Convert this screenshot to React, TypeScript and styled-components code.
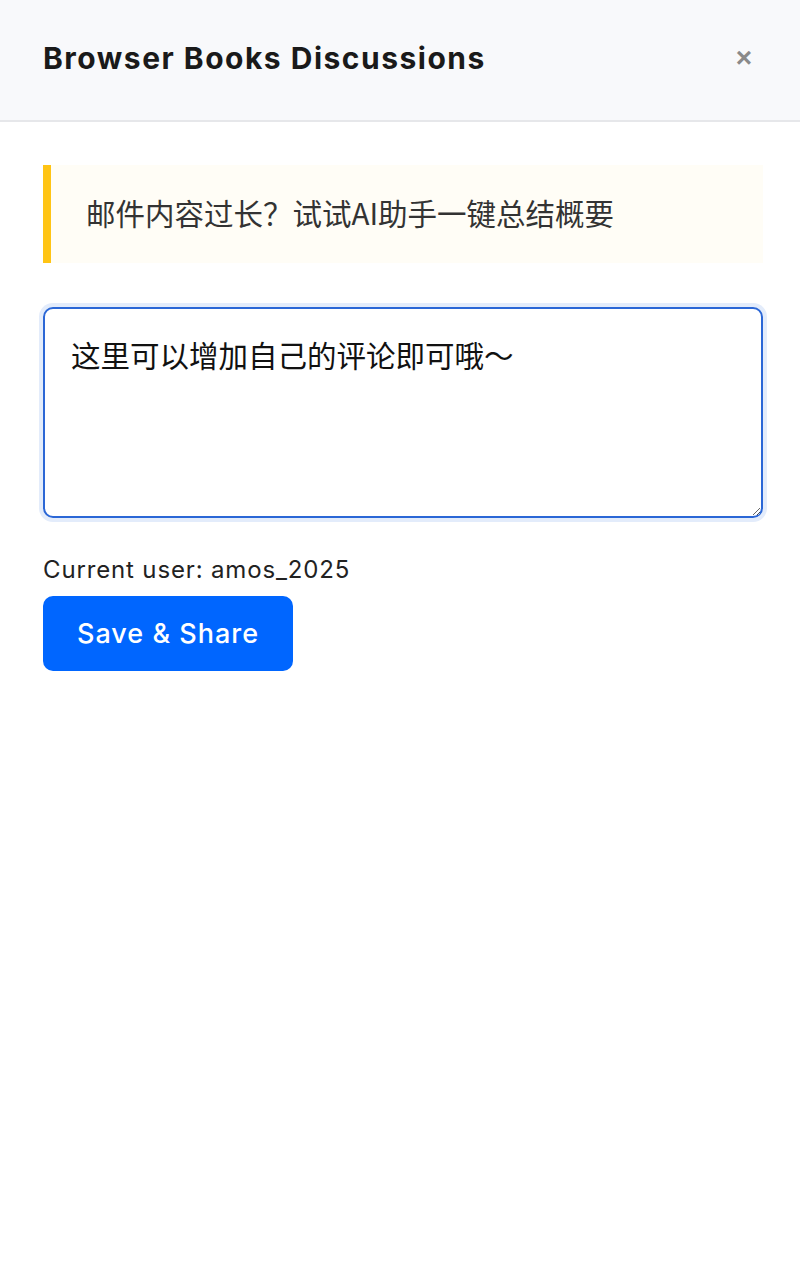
import React from "react";
import styled, { createGlobalStyle } from "styled-components";

const Global = createGlobalStyle`
  html, body { margin: 0; padding: 0; background: #ffffff; }
  body { font-family: Inter, "Noto Sans CJK SC", sans-serif; }
  * { box-sizing: border-box; }
`;

const Page = styled.div`
  width: 800px;
  min-height: 1283px;
  background: #ffffff;
  display: flex;
  flex-direction: column;
`;

const Header = styled.header`
  height: 122px;
  background: #f8f9fb;
  border-bottom: 2px solid #e6e7ea;
  display: flex;
  align-items: center;
  justify-content: space-between;
  padding: 0 43px 4px 43px;
`;

const Title = styled.h1`
  margin: 0;
  font-family: Inter, sans-serif;
  font-size: 30px;
  font-weight: 700;
  color: #1a1a1a;
  letter-spacing: 1.5px;
`;

const CloseButton = styled.button`
  border: none;
  background: transparent;
  color: #8a8a8a;
  font-family: "Liberation Sans", sans-serif;
  font-size: 28px;
  font-weight: 700;
  line-height: 1;
  padding: 0;
  margin-right: -5px;
  cursor: pointer;
  display: flex;
  align-items: center;
  justify-content: center;
  width: 36px;
  height: 36px;
`;

const Body = styled.main`
  padding: 43px 37px 0 43px;
  display: flex;
  flex-direction: column;
`;

const Notice = styled.div`
  height: 98px;
  background: #fffdf6;
  border-left: 8px solid #ffc414;
  display: flex;
  align-items: center;
  padding-left: 35px;
  padding-bottom: 4px;
  font-family: "Noto Sans CJK SC", sans-serif;
  font-size: 29.5px;
  color: #333333;
`;

const Comment = styled.textarea`
  margin-top: 44px;
  width: 720px;
  height: 211px;
  border: 2px solid #2b67d6;
  border-radius: 10px;
  box-shadow: 0 0 0 4px #e3ecfb;
  padding: 25px 26px;
  font-family: "Noto Sans CJK SC", sans-serif;
  font-size: 29.5px;
  line-height: 1.4;
  color: #111111;
  outline: none;
  resize: vertical;
`;

const UserLine = styled.div`
  margin-top: 38px;
  font-family: Inter, sans-serif;
  font-size: 24px;
  letter-spacing: 0.85px;
  color: #222222;
  line-height: 28px;
`;

const PrimaryButton = styled.button`
  margin-top: 12px;
  align-self: flex-start;
  height: 75px;
  padding: 0 34px;
  border: none;
  border-radius: 10px;
  background: #0066ff;
  color: #ffffff;
  font-family: Inter, sans-serif;
  font-size: 27px;
  font-weight: 500;
  letter-spacing: 1px;
  cursor: pointer;
`;

export default function App() {
  return (
    <>
      <Global />
      <Page>
        <Header>
          <Title>Browser Books Discussions</Title>
          <CloseButton aria-label="close">×</CloseButton>
        </Header>
        <Body>
          <Notice>邮件内容过长？试试AI助手一键总结概要</Notice>
          <Comment defaultValue="这里可以增加自己的评论即可哦～" />
          <UserLine>Current user: amos_2025</UserLine>
          <PrimaryButton>Save &amp; Share</PrimaryButton>
        </Body>
      </Page>
    </>
  );
}
